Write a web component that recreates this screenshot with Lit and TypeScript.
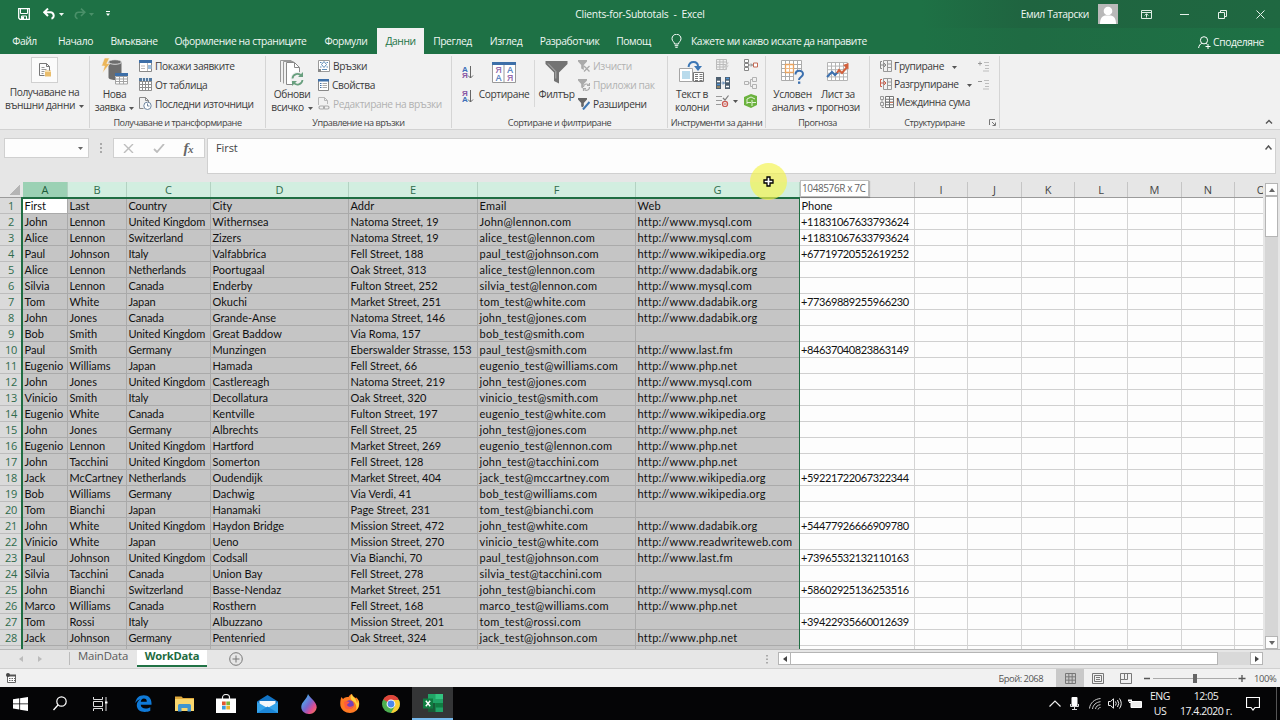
import { LitElement, css, html, svg, nothing } from 'lit'
import type { TemplateResult, SVGTemplateResult } from 'lit'

const icon = (w: number, h: number, body: SVGTemplateResult) =>
  html`<svg class="icon" width=${w} height=${h} viewBox="0 0 ${w} ${h}" fill="none">${body}</svg>`

const grid = (x: number, y: number, w: number, h: number, cols: number, rows: number, color: string) => {
  let d = `M${x} ${y}h${w}v${h}h${-w}z`
  for (let i = 1; i < cols; i++) d += `M${x + (w / cols) * i} ${y}v${h}`
  for (let i = 1; i < rows; i++) d += `M${x} ${y + (h / rows) * i}h${w}`
  return svg`<path d=${d} stroke=${color} />`
}

const caret = html`<svg class="caret" width="5" height="3" viewBox="0 0 5 3"><path d="M0 0h5L2.5 3z" fill="currentColor" /></svg>`

/* title bar */
const saveIcon = icon(12, 12, svg`<path d="M.7.7h10.6v10.6H2L.7 10z" stroke="#fff" stroke-width="1.3"/><path d="M2.5 1v4.5h7V1M3.5 11V8h5v3" stroke="#fff"/><path d="M4 8.5h2V11H4z" fill="#fff"/>`)
const undoIcon = icon(13, 12, svg`<path d="M1 4.300h6.300a3.300 3.300 0 0 1 1.200 6.400M5 .6L1.200 4.300 5 8" stroke="#fff" stroke-width="2"/>`)
const redoIcon = icon(13, 12, svg`<path d="M12 4.300H5.700a3.300 3.300 0 0 0-1.200 6.400M8 .6l3.800 3.700L8 8" stroke="#4a9069" stroke-width="1.600"/>`)
const customizeIcon = icon(4, 6, svg`<path d="M0 .5h4" stroke="#fff"/><path d="M0 2.500h4L2 5z" fill="#fff"/>`)
const avatar = icon(20, 20, svg`<path d="M0 0h20v20H0z" fill="#b9b9b9"/><circle cx="10" cy="7" r="4.300" fill="#fff"/><path d="M2 20c0-5 1.500-7.500 5-8.500h6c3.500 1 5 3.500 5 8.500z" fill="#fff"/>`)
const ribbonModeIcon = icon(11, 9, svg`<path d="M.5.5h10v8H.5zM.5 2.500h10" stroke="#dfeee5"/><path d="M5.500 7.500V4M3.700 5.500L5.500 3.700l1.800 1.800" stroke="#dfeee5"/>`)
const minimizeIcon = icon(9, 9, svg`<path d="M0 4.500h9" stroke="#e6f1ea"/>`)
const restoreIcon = icon(9, 9, svg`<path d="M.5 2.500h6v6h-6zM2.500 2V.5h6v6H7" stroke="#e6f1ea"/>`)
const closeIcon = icon(9, 9, svg`<path d="M.5.5l8 8M8.500.5l-8 8" stroke="#e6f1ea"/>`)
const bulbIcon = icon(11, 14, svg`<path d="M3.500 10c0-2-2.500-2.800-2.500-5.300a4.500 4.500 0 0 1 9 0C10 7.200 7.500 8 7.500 10zM3.700 11.700h3.600M4.300 13.300h2.400" stroke="#fff"/>`)
const shareIcon = icon(13, 13, svg`<circle cx="6" cy="4.300" r="3.600" stroke="#fff"/><path d="M.6 12c.4-2.500 1.500-4 3.200-4.600M8 7.400l1.200.8M10 8v5M7.500 10.500h5" stroke="#fff"/>`)

/* ribbon, large */
const externalDataIcon = icon(12, 14, svg`<path d="M.5.500h7l3 3v5M.5.500v12h5M7.500.500v3h3" stroke="#777"/><path d="M2.500 4.500h3M2.500 6.500h5M2.500 8.500h3M2.500 10.500h2" stroke="#999"/><path d="M6 7.500h6v6H6z" fill="#e9bd6c"/><path d="M6 8.500h6" stroke="#f6dfae"/>`)
const newQueryIcon = icon(28, 28, svg`<path d="M7.500 4v15.500c0 1.500 3 2.500 6.500 2.500s6.500-1 6.500-2.500V4z" fill="#6d6d6d"/><ellipse cx="14" cy="4" rx="6.500" ry="2.300" fill="#6d6d6d" stroke="#f1f1f1" stroke-width=".8"/><path d="M3.500 0h5L5.800 5.500H9L1.500 15l2-7H.5z" fill="#ecb65a" stroke="#f1f1f1" stroke-width=".6"/><path d="M14 15h13v11H14z" fill="#fff"/>${grid(14.5, 18.5, 12, 7.5, 3, 3, '#a3a3a3')}<path d="M14 15h13v3H14z" fill="#3d6fa8"/>`)
const refreshIcon = icon(26, 27, svg`<path d="M1.500 23V1.500h11M4.500 24.500V2.500h10" stroke="#9a9a9a"/><path d="M7.500 3.500h8l5 5v17h-13z" fill="#fff" stroke="#8a8a8a"/><path d="M15.500 3.500v5h5" stroke="#8a8a8a"/><circle cx="18.500" cy="20" r="7.200" fill="#f1f1f1"/><path d="M13.500 19.500a5 5 0 0 1 9-2.500M23.500 21a5 5 0 0 1-9 2.500" stroke="#69a07f" stroke-width="1.800"/><path d="M24 13v5h-5zM13 27v-5h5z" fill="#69a07f"/>`)
const sortIcon = icon(24, 21, svg`<path d="M.5.500h23v20H.5z" fill="#fff" stroke="#999"/><path d="M0 0h24v3H0z" fill="#3d6fa8"/><path d="M12 3v18" stroke="#999"/><g font-family="Liberation Sans" font-size="8.500" stroke-width=".2" text-anchor="middle"><text x="6.300" y="11" fill="#8857a4" stroke="#8857a4">Я</text><text x="6.300" y="19" fill="#3d6fb8" stroke="#3d6fb8">А</text><text x="17.800" y="11" fill="#3d6fb8" stroke="#3d6fb8">А</text><text x="17.800" y="19" fill="#8857a4" stroke="#8857a4">Я</text></g>`)
const sortPair = (top: string, bottom: string, c1: string, c2: string) =>
  icon(12, 14, svg`<g font-family="Liberation Sans" font-size="8" font-weight="700"><text x="0" y="6.500" fill=${c1}>${top}</text><text x="0" y="13" fill=${c2}>${bottom}</text></g><path d="M8.500 1v12M6 10.500l2.500 2.500 2.500-2.500" stroke="#666"/>`)
const filterIcon = icon(23, 23, svg`<path d="M.5 0h22v3l-8.500 8.500v11L9 20v-8.500L.5 3z" fill="#737373"/><path d="M3 2.500l7.800 8v7" stroke="#b3b3b3"/>`)
const textToColumnsIcon = icon(26, 22, svg`<path d="M.5 7.500h13v13H.5z" fill="#fff" stroke="#a5a5a5"/><path d="M3 10h8v8H3z" fill="#b9dbec"/><path d="M9.500 6c.5-3.500 2.500-5 5-5s4.500 1.500 4.500 4.500" stroke="#3d77b5" stroke-width="2"/><path d="M15 5h8l-4 5z" fill="#3d77b5"/><path d="M14.500 11.500h10v9h-10z" fill="#fff" stroke="#777"/><path d="M16 13.500h3M20.500 13.500h3M16 15.500h3M20.500 15.500h3M16 17.500h3M20.500 17.500h3M16 19.500h3M20.500 19.500h3" stroke="#777"/>`)
const whatIfIcon = icon(24, 24, svg`<path d="M.5.500h20v20H.5z" fill="#fff"/>${grid(0.5, 0.5, 20, 20, 5, 5, '#ababab')}<path d="M4.500 4.500h8v8h-8z" stroke="#e9a35f" stroke-width="1.300"/><path d="M4.500 8.500h8M8.500 4.500v8" stroke="#f0b985"/><path d="M13 10h11v14H13z" fill="#f1f1f1"/><path d="M14.500 14.500c0-5 7.500-5 7.500-.5 0 3-4 3-4 6" stroke="#3a6fae" stroke-width="2"/><path d="M17 21.500h2.300v2.300H17z" fill="#3a6fae"/>`)
const forecastIcon = icon(24, 22, svg`<path d="M1 1h21v19H1z" fill="#fff"/>${grid(1.5, 1.5, 20, 18, 5, 5, '#b5b5b5')}<path d="M1 16l5-5 3 3 3-3" stroke="#3a6fae" stroke-width="2"/><path d="M11 12l2-3 3 3 5-6" stroke="#d2603c" stroke-width="2"/><path d="M22.500 2v6.500L17 4z" fill="#d2603c"/>`)

/* ribbon, small */
const showQueriesIcon = icon(13, 12, svg`<path d="M.5.500h12v11H.5z" fill="#fff" stroke="#888"/><path d="M0 0h13v3H0z" fill="#3d6fa8"/><path d="M8.500 3v8M2 6h4M2 8.500h4" stroke="#bbb"/><path d="M9 5h3.500v4H9z" fill="#9cbede"/>`)
const fromTableIcon = icon(13, 13, svg`<path d="M.5.500h12v12H.5z" fill="#fff"/>${grid(0.5, 0.5, 12, 12, 4, 4, '#8e8e8e')}<path d="M0 0h13v3H0z" fill="#53799f"/><path d="M3.500 0v3M6.500 0v3M9.500 0v3" stroke="#d5e2ee"/>`)
const recentIcon = icon(13, 13, svg`<path d="M.5.500h6l3 3v3M.5.500v11h4M6.500.500v3h3" stroke="#888"/><circle cx="8.500" cy="8.800" r="3.700" fill="#fff" stroke="#6f86a0"/><path d="M8.500 6.500v2.500h2" stroke="#6f86a0"/>`)
const connectionsIcon = icon(12, 12, svg`<path d="M.5.500h11v11H.5z" fill="#fff" stroke="#9a9a9a"/><path d="M6 1.500l2.500 3L6 7.500l-2.500-3zM2 2.500h1.500M8.500 2.500H10M2 7h1.500M8.500 7H10" stroke="#5f8db8"/><path d="M4 9.500h5" stroke="#5f8db8"/><path d="M0 9h3v3H0z" fill="#888"/>`)
const propertiesIcon = icon(11, 12, svg`<path d="M.5.500h10v11H.5z" fill="#fff" stroke="#888"/><path d="M0 0h11v2.500H0z" fill="#3d6fa8"/><path d="M2 4.500h1.500M2 6.500h1.500M2 8.500h1.500" stroke="#3d6fa8"/><path d="M4.500 4.500H9M4.500 6.500H9M4.500 8.500H9" stroke="#aaa"/>`)
const editLinksIcon = icon(12, 13, svg`<path d="M.5 8V.500h6l3 3V7M6.500.500v3h3" stroke="#b8b8b8"/><rect x="1" y="9" width="5.500" height="3" rx="1.500" stroke="#aaa" stroke-width="1.200"/><rect x="5.500" y="9" width="5.500" height="3" rx="1.500" stroke="#aaa" stroke-width="1.200"/>`)
const funnel = (c: string) => svg`<path d="M0 0h9v1.500L5.800 5v5L3.200 8.500V5L0 1.500z" fill=${c}/>`
const clearIcon = icon(12, 12, svg`${funnel('#aaa')}<path d="M6 6l5.500 5.500M11.500 6L6 11.500" stroke="#aaa" stroke-width="1.300"/>`)
const reapplyIcon = icon(12, 12, svg`${funnel('#aaa')}<circle cx="8.500" cy="8" r="3.500" fill="#f1f1f1"/><path d="M5.500 8a3 3 0 0 1 5-2.200M11.500 8a3 3 0 0 1-5 2.500M11.500 4v2.500H9M5.500 12V9.500H8" stroke="#aaa" stroke-width="1.200"/>`)
const advancedIcon = icon(12, 12, svg`${funnel('#666')}<path d="M11.500 4.500L5.500 11" stroke="#f1f1f1" stroke-width="3.500"/><path d="M11.500 4L5 11.500" stroke="#3f77b2" stroke-width="2"/>`)
const flashFillIcon = icon(13, 12, svg`${grid(0.5, 0.5, 10, 10, 3, 4, '#bbb')}<path d="M11 3.500L7.500 8H10l-2 4 5-5.500h-2.500L13 3.500z" fill="#c9c9c9"/>`)
const duplicatesIcon = icon(14, 12, svg`<path d="M0 0h5v12H0zM9 0h5v12H9z" fill="#4d5f70"/><path d="M1 4.500h3M10 4.500h3M10 9.500h3" stroke="#fff" stroke-width="1.500"/><path d="M1 7.500h3M10 1.500h3" stroke="#4c8fd0" stroke-width="1.500"/><path d="M1 10h3" stroke="#e0b05a"/><path d="M5.500 6H8M7 4.500L8.500 6 7 7.500" stroke="#4c7cb0"/>`)
const validationIcon = icon(13, 12, svg`<path d="M0 1.500h6M0 5.500h6M0 9.500h5" stroke="#999"/><path d="M7 3l2 2 3.500-4.500" stroke="#7c7c7c" stroke-width="1.200"/><circle cx="9" cy="9" r="2.600" stroke="#cc5a52" stroke-width="1.200"/><path d="M7.500 9h3" stroke="#cc5a52"/>`)
const consolidateIcon = icon(14, 12, svg`<path d="M.5.500h4v3h-4zM.5 4.500h4v3h-4zM.5 8.500h4v3h-4z" fill="#fff" stroke="#888"/><path d="M4.500 6h4M7 4.500L8.500 6 7 7.500" stroke="#888"/><path d="M9.500 4h4v4h-4z" fill="#fff" stroke="#c26a55"/>`)
const relationsIcon = icon(13, 12, svg`<path d="M.5 4.500h4v3h-4zM8.500.500h4v4h-4zM8.500 7.500h4v4h-4zM4.500 6h2M6.500 2.500v7M6.500 2.500h2M6.500 9.500h2" stroke="#b2b2b2"/>`)
const dataModelIcon = icon(14, 14, svg`<path d="M7 0l6 2v9l-6 3-7-3V3z" fill="#6cb33f"/><path d="M3 5l4-2 4 2M3 8.500h4M8 6v6M8 8.500h4M3 5v5" stroke="#e3f2da"/>`)
const groupIcon = (c: string) => icon(12, 12, svg`<path d="M3.500.500h8v11h-8zM7.500.500v11M7.500 4h4M7.500 7.500h4" stroke="#999"/><path d="M2 1.500H.5v7H2M1 5h4M4 3l2 2-2 2" stroke=${c}/>`)
const subtotalIcon = icon(14, 12, svg`<path d="M5 0h9v12H5z" fill="#fff"/>${grid(5.5, 0.5, 8, 11, 2, 4, '#777')}<path d="M.5.500h3v3h-3zM.5 6.500h3v3h-3zM2 3.500v3M2 9.500v2h2" stroke="#999"/><path d="M10 6.500h3" stroke="#d07a5c"/><path d="M6 6.500h3" stroke="#888"/>`)
const detailIcon = (plus: boolean) => icon(12, 11, svg`<path d="M0 2.500h4${plus ? 'M2 .500v4' : ''}" stroke="#999"/><path d="M6 1.500h5M7 4.500h4M7 7.500h4M5 10h6" stroke="#bdbdbd"/>`)
const launcherIcon = icon(7, 7, svg`<path d="M.5 6V.500H6M3 3l3 3M6.500 3.500v3h-3" stroke="#777"/>`)

/* taskbar */
const startIcon = icon(15, 14, svg`<path d="M0 2.200L6.300 1.300v5.200H0zM7.100 1.200L15 0v6.500H7.100zM0 7.300h6.300v5.200L0 11.600zM7.100 7.300H15V14l-7.900-1.200z" fill="#fff"/>`)
const searchIcon = icon(14, 15, svg`<circle cx="8.500" cy="5.500" r="4.700" stroke="#fff" stroke-width="1.200"/><path d="M5 9L.5 14" stroke="#fff" stroke-width="1.300"/>`)
const taskViewIcon = icon(15, 14, svg`<path d="M.5 0v2.500h9V0M.5 14v-2.500h9V14M.5 4.500h9v5h-9zM13 0v14" stroke="#ddd"/><path d="M12 4.500h2.500v2H12z" fill="#fff"/>`)
const edgeIcon = icon(17, 17, svg`<path d="M.3 8C1 3 4.200.3 8.800.3c5 0 7.700 3.300 7.700 8v1.500H5.700c.2 2.500 2.200 3.700 4.900 3.700 1.800 0 3.300-.4 4.700-1.300v3.500c-1.500.8-3.300 1.200-5.500 1.200C5 16.900 1.800 14.300 1.800 10.200c0-2.700 1.400-4.800 3.700-6C3.300 4.800 1.500 6 .3 8zM5.800 6.800h6c0-2-1-3.200-2.900-3.200S6 4.900 5.800 6.800z" fill="#0f7ad8"/>`)
const explorerIcon = icon(19, 16, svg`<path d="M0 .5h6.500L8 2h11v4H0z" fill="#e0a93c"/><path d="M0 3h19v12H0z" fill="#f9d66d"/><path d="M3 15.500V9.500q0-1.500 1.500-1.500h10q1.500 0 1.500 1.500v6h-3.500V12h-6v3.500z" fill="#3f95d0"/>`)
const storeIcon = icon(20, 19, svg`<path d="M6.500 6V3.500a3.500 3 0 0 1 7 0V6" stroke="#eee" stroke-width="1.200"/><path d="M0 4.500h20V19H0z" fill="#fff"/><path d="M6 7.500h3.700v3.700H6z" fill="#e3572e"/><path d="M10.300 7.500H14v3.700h-3.700z" fill="#7eb53a"/><path d="M6 11.800h3.700v3.700H6z" fill="#3a9ce0"/><path d="M10.300 11.800H14v3.700h-3.700z" fill="#efb52e"/>`)
const mailIcon = icon(21, 18, svg`<path d="M0 6.500L10.500 0 21 6.500V17.500H0z" fill="#1273c4"/><path d="M2.500 6h16v5l-8 3-8-3z" fill="#f3f6fa"/><path d="M0 7l10.500 6L21 7v11H0z" fill="#35a3ea"/><path d="M0 18L10.500 11.500 21 18z" fill="#1c87d8"/>`)
const paintIcon = icon(16, 20, svg`<defs><linearGradient id="drop" x1="0" y1="0" x2="1" y2="1"><stop offset=".15" stop-color="#48b2ed"/><stop offset=".5" stop-color="#7967ce"/><stop offset=".72" stop-color="#e04c91"/><stop offset="1" stop-color="#f08447"/></linearGradient></defs><path d="M7 0c2 4 9 8 8.700 13.500A7.300 7 0 0 1 8 20C3.500 20 0 17 .3 12.500.500 8 6 5 7 0z" fill="url(#drop)"/>`)
const firefoxIcon = icon(20, 19, svg`<path d="M1.500 3l1.500 2c2-2 4-2 5.500-2 1-2 2.500-3 3.500-3 0 2 1.500 2.500 3.500 4l1-.5C19 6 19.800 9 19 12c-1 4-4.500 7-9 7s-9-3-9.600-7.500C0 8.500.5 5 1.500 3z" fill="#ff7a23"/><path d="M12 0c0 3 4.500 4 5 9.500 1-1.500.8-3.500 0-5 3 3 2.500 9-1 12 1-3 .5-8-4-10-2-1.500-2-5 0-6.500z" fill="#ffd23e"/><circle cx="9.500" cy="10.500" r="4.300" fill="#7840b8"/><path d="M4 8c2-1.500 3.500 0 5.500 0-.5 1.500-2 1.500-2.500 3 1 2.500 4.500 2 6.500.5-1 4-6 5-8.500 2.500z" fill="#ff5a3d"/>`)
const chromeIcon = icon(18, 18, svg`<circle cx="9" cy="9" r="9" fill="#4caf50"/><path d="M9 9L1.200 4.500A9 9 0 0 1 16.800 4.500z" fill="#e0453a"/><path d="M9 5h7.900A9 9 0 0 1 9 18l4-7z" fill="#fbce35"/><circle cx="9" cy="9" r="4.400" fill="#fff"/><circle cx="9" cy="9" r="3.400" fill="#4d88ec"/>`)
const excelIcon = icon(20, 18, svg`<path d="M5 0h15v18H5z" fill="#21a366"/><path d="M12.500 0H20v5h-7.500z" fill="#33c481"/><path d="M5 9h7.500v9H5z" fill="#185c37"/><path d="M12.500 9H20v4.500h-7.500z" fill="#107c41"/><path d="M0 4.500h10v10H0z" fill="#107c41"/><path d="M2.800 6.800l4.400 5.400M7.200 6.800l-4.400 5.400" stroke="#fff" stroke-width="1.400"/>`)

const taskbarApps = [edgeIcon, explorerIcon, storeIcon, mailIcon, paintIcon, firefoxIcon, chromeIcon, excelIcon]

const chevronUpIcon = icon(12, 7, svg`<path d="M.5 6.500L6 1l5.500 5.500" stroke="#eee" stroke-width="1.200"/>`)
const micIcon = icon(9, 13, svg`<rect x="1.500" y="0" width="6" height="9" rx="1" fill="#fff"/><path d="M.5 7v2.500h8V7M4.500 10v2.500M2 12.500h5" stroke="#ddd"/>`)
const wifiIcon = icon(12, 12, svg`<path d="M.5 10.500C1 5 5.500 1 11.500.500M3.500 11C4 7 7 4.200 11.500 3.700M6.500 11c.5-2.500 2-4 5-4.300M9 11.500c.3-1 1-2 2.500-2" stroke="#ccc"/>`)
const speakerIcon = icon(14, 11, svg`<path d="M.5 3.500h2L5.500.8v9.400L2.500 7.500h-2zM7.500 3.500q1.500 2 0 4M9.500 2q2.500 3.500 0 7M11.500.500q3.500 5 0 10" stroke="#eee"/>`)
const batteryIcon = icon(14, 10, svg`<path d="M3 2.500h10.500v6H3z" fill="#eee" stroke="#fff"/><path d="M0 1.500h4M1 0v3q1 2 2 0V0" stroke="#fff"/>`)
const noticeIcon = icon(14, 14, svg`<path d="M.5.500h13v10H9L7 13l-2-2.500H.5z" stroke="#fff" stroke-width="1.200"/>`)

const tabs: [string, number][] = [
  ['Файл', 41],
  ['Начало', 61],
  ['Вмъкване', 56],
  ['Оформление на страниците', 157],
  ['Формули', 54],
  ['Данни', 47],
  ['Преглед', 57],
  ['Изглед', 50],
  ['Разработчик', 77],
  ['Помощ', 51],
]

const columns: [string, number][] = [
  ['A', 45], ['B', 59], ['C', 84], ['D', 138], ['E', 129], ['F', 158], ['G', 164],
  ['', 115], ['I', 53], ['J', 54], ['K', 53], ['L', 53], ['M', 54], ['N', 53], ['O', 53],
]
const selectedColumns = 7

const clients = `First|Last|Country|City|Addr|Email|Web|Phone
John|Lennon|United Kingdom|Withernsea|Natoma Street, 19|John@lennon.com|http://www.mysql.com|+11831067633793624
Alice|Lennon|Switzerland|Zizers|Natoma Street, 19|alice_test@lennon.com|http://www.mysql.com|+11831067633793624
Paul|Johnson|Italy|Valfabbrica|Fell Street, 188|paul_test@johnson.com|http://www.wikipedia.org|+67719720552619252
Alice|Lennon|Netherlands|Poortugaal|Oak Street, 313|alice_test@lennon.com|http://www.dadabik.org|
Silvia|Lennon|Canada|Enderby|Fulton Street, 252|silvia_test@lennon.com|http://www.mysql.com|
Tom|White|Japan|Okuchi|Market Street, 251|tom_test@white.com|http://www.dadabik.org|+77369889255966230
John|Jones|Canada|Grande-Anse|Natoma Street, 146|john_test@jones.com|http://www.dadabik.org|
Bob|Smith|United Kingdom|Great Baddow|Via Roma, 157|bob_test@smith.com||
Paul|Smith|Germany|Munzingen|Eberswalder Strasse, 153|paul_test@smith.com|http://www.last.fm|+84637040823863149
Eugenio|Williams|Japan|Hamada|Fell Street, 66|eugenio_test@williams.com|http://www.php.net|
John|Jones|United Kingdom|Castlereagh|Natoma Street, 219|john_test@jones.com|http://www.mysql.com|
Vinicio|Smith|Italy|Decollatura|Oak Street, 320|vinicio_test@smith.com|http://www.php.net|
Eugenio|White|Canada|Kentville|Fulton Street, 197|eugenio_test@white.com|http://www.wikipedia.org|
John|Jones|Germany|Albrechts|Fell Street, 25|john_test@jones.com|http://www.php.net|
Eugenio|Lennon|United Kingdom|Hartford|Market Street, 269|eugenio_test@lennon.com|http://www.php.net|
John|Tacchini|United Kingdom|Somerton|Fell Street, 128|john_test@tacchini.com|http://www.php.net|
Jack|McCartney|Netherlands|Oudendijk|Market Street, 404|jack_test@mccartney.com|http://www.wikipedia.org|+59221722067322344
Bob|Williams|Germany|Dachwig|Via Verdi, 41|bob_test@williams.com|http://www.wikipedia.org|
Tom|Bianchi|Japan|Hanamaki|Page Street, 231|tom_test@bianchi.com||
John|White|United Kingdom|Haydon Bridge|Mission Street, 472|john_test@white.com|http://www.dadabik.org|+54477926666909780
Vinicio|White|Japan|Ueno|Mission Street, 270|vinicio_test@white.com|http://www.readwriteweb.com|
Paul|Johnson|United Kingdom|Codsall|Via Bianchi, 70|paul_test@johnson.com|http://www.last.fm|+73965532132110163
Silvia|Tacchini|Canada|Union Bay|Fell Street, 278|silvia_test@tacchini.com||
John|Bianchi|Switzerland|Basse-Nendaz|Market Street, 251|john_test@bianchi.com|http://www.mysql.com|+58602925136253516
Marco|Williams|Canada|Rosthern|Fell Street, 168|marco_test@williams.com|http://www.php.net|
Tom|Rossi|Italy|Albuzzano|Mission Street, 201|tom_test@rossi.com||+39422935660012639
Jack|Johnson|Germany|Pentenried|Oak Street, 324|jack_test@johnson.com|http://www.php.net|
|||||||`
  .split('\n')
  .map((line) => line.split('|'))

export class ExcelRibbon extends LitElement {
  static styles = css`
    :host {
      display: flex;
      height: 75px;
      background: #f1f1f1;
      border-bottom: 1px solid #d2d2d2;
      color: #3b3b3b;
      font-family: 'Open Sans', 'Noto Sans', sans-serif;
      font-size: 10.2px;
      letter-spacing: -0.39px;
      white-space: nowrap;
      position: relative;
    }
    .icon,
    .caret {
      display: block;
      flex: none;
    }
    .caret {
      display: inline-block;
      vertical-align: middle;
      margin-left: 4px;
      color: #555;
    }
    .row .caret {
      margin-left: 6px;
    }
    .group {
      box-sizing: border-box;
      position: relative;
      display: flex;
      flex-direction: column;
      height: 72px;
      margin-top: 2px;
      border-right: 1px solid #d5d5d5;
      flex: none;
    }
    .body {
      display: flex;
      flex: none;
      height: 60px;
    }
    .caption {
      flex: none;
      text-align: center;
      font-size: 9.1px;
      line-height: 14px;
      letter-spacing: -0.46px;
      color: #444;
    }
    .big {
      display: flex;
      flex-direction: column;
      align-items: center;
      text-align: center;
      line-height: 13px;
      flex: none;
    }
    .pic {
      height: 32px;
      display: flex;
      align-items: center;
      justify-content: center;
    }
    .boxed {
      width: 25px;
      height: 24px;
      border: 1px solid #d0d0d0;
      background: #fbfbfb;
      margin: 1px 0 3px;
    }
    .stack {
      display: flex;
      flex-direction: column;
    }
    .row {
      display: flex;
      align-items: center;
      gap: 3px;
      height: 19px;
    }
    .tight {
      padding-top: 1px;
    }
    .tight .row {
      height: 18px;
      gap: 2px;
    }
    .off {
      color: #b1b1b1;
    }
    .sorts {
      box-sizing: border-box;
      width: 27px;
      padding: 9px 0 0 10px;
      gap: 10px;
    }
    .divider {
      width: 1px;
      height: 47px;
      margin: 4px 0 0 5px;
      background: #d8d8d8;
    }
    .tools {
      display: grid;
      grid-template-columns: 28px 14px;
      grid-auto-rows: 18px;
      align-items: center;
    }
    .pair {
      display: flex;
      align-items: center;
    }
    .launcher {
      position: absolute;
      right: 3px;
      bottom: 2px;
    }
    .collapse {
      margin: auto 7px 5px auto;
    }
  `

  big(width: number, pic: TemplateResult, first: string, second = '', menu = false) {
    return html`<div class="big" style="width:${width}px">
      <div class="pic">${pic}</div>
      <div>${first}</div>
      ${second ? html`<div>${second}${menu ? caret : nothing}</div>` : nothing}
    </div>`
  }

  row(pic: TemplateResult, text: string, off = false) {
    return html`<div class="row ${off ? 'off' : ''}">${pic}<span>${text}</span></div>`
  }

  group(width: number, caption: string, body: TemplateResult, extra: unknown = nothing) {
    return html`<div class="group" style="width:${width}px">
      <div class="body">${body}</div>
      <div class="caption">${caption}</div>
      ${extra}
    </div>`
  }

  render() {
    return html`
      ${this.group(90, '', html`
        <div class="big" style="width:89px">
          <div class="pic boxed">${externalDataIcon}</div>
          <div>Получаване на</div>
          <div>външни данни${caret}</div>
        </div>
      `)}
      ${this.group(176, 'Получаване и трансформиране', html`
        ${this.big(49, newQueryIcon, 'Нова', 'заявка', true)}
        <div class="stack">
          ${this.row(showQueriesIcon, 'Покажи заявките')}
          ${this.row(fromTableIcon, 'От таблица')}
          ${this.row(recentIcon, 'Последни източници')}
        </div>
      `)}
      ${this.group(186, 'Управление на връзки', html`
        ${this.big(52, refreshIcon, 'Обнови', 'всичко', true)}
        <div class="stack">
          ${this.row(connectionsIcon, 'Връзки')}
          ${this.row(propertiesIcon, 'Свойства')}
          ${this.row(editLinksIcon, 'Редактиране на връзки', true)}
        </div>
      `)}
      ${this.group(216, 'Сортиране и филтриране', html`
        <div class="stack sorts">
          ${sortPair('А', 'Я', '#3d6fb8', '#8857a4')}
          ${sortPair('Я', 'А', '#8857a4', '#3d6fb8')}
        </div>
        ${this.big(50, sortIcon, 'Сортиране')}
        <div class="divider"></div>
        ${this.big(43, filterIcon, 'Филтър')}
        <div class="stack">
          ${this.row(clearIcon, 'Изчисти', true)}
          ${this.row(reapplyIcon, 'Приложи пак', true)}
          ${this.row(advancedIcon, 'Разширени')}
        </div>
      `)}
      ${this.group(98, 'Инструменти за данни', html`
        ${this.big(48, textToColumnsIcon, 'Текст в', 'колони')}
        <div class="tools">
          ${flashFillIcon}${consolidateIcon}
          ${duplicatesIcon}${relationsIcon}
          <div class="pair">${validationIcon}${caret}</div>
          ${dataModelIcon}
        </div>
      `)}
      ${this.group(104, 'Прогноза', html`
        ${this.big(53, whatIfIcon, 'Условен', 'анализ', true)}
        ${this.big(38, forecastIcon, 'Лист за', 'прогнози')}
      `)}
      ${this.group(130, 'Структуриране', html`
        <div class="stack tight" style="width:108px;padding-left:10px;box-sizing:border-box">
          <div class="row">${groupIcon('#888')}<span>Групиране ${caret}</span></div>
          <div class="row">${groupIcon('#cb5f4c')}<span>Разгрупиране ${caret}</span></div>
          ${this.row(subtotalIcon, 'Междинна сума')}
        </div>
        <div class="stack tight">
          <div class="row">${detailIcon(true)}</div>
          <div class="row">${detailIcon(false)}</div>
        </div>
      `, html`<div class="launcher">${launcherIcon}</div>`)}
      <div class="collapse">${icon(8, 5, svg`<path d="M1 4.500L4 1.500l3 3" stroke="#555" stroke-width="1.400"/>`)}</div>
    `
  }
}

export class ExcelSheet extends LitElement {
  static styles = css`
    :host {
      display: flex;
      height: 467px;
      background: #e6e6e6;
      letter-spacing: 0;
    }
    .grid {
      width: 1263px;
      overflow: hidden;
      position: relative;
      flex: none;
    }
    .line {
      display: flex;
      height: 16px;
      width: 1400px;
    }
    .heads {
      height: 15px;
      border-bottom: 1px solid #9b9b9b;
      font-family: 'Open Sans', sans-serif;
      font-size: 11px;
      line-height: 16px;
      color: #444;
    }
    .corner {
      width: 23px;
      flex: none;
      background: linear-gradient(135deg, #e6e6e6 60%, #b5b5b5 60%);
      clip-path: inset(0 3px 2px 0);
    }
    .head {
      box-sizing: border-box;
      flex: none;
      text-align: center;
      border-right: 1px solid #c5c5c5;
    }
    .head.sel {
      background: #d2eee0;
      color: #2f6b4c;
      border-color: #b3d2c2;
    }
    .head.active {
      background: #9bd1b4;
      color: #1c5c3b;
    }
    .num {
      box-sizing: border-box;
      width: 23px;
      padding-right: 1px;
      flex: none;
      background: #dadada;
      border-bottom: 1px solid #bdbdbd;
      color: #2f6b4c;
      text-align: center;
      font-family: 'Open Sans', sans-serif;
      font-size: 11px;
      line-height: 16px;
      letter-spacing: -0.2px;
    }
    .cell {
      box-sizing: border-box;
      flex: none;
      border-right: 1px solid #d4d4d4;
      border-bottom: 1px solid #d0d0d0;
      background: #fdfdfd;
      padding-left: 1.5px;
      color: #111;
      font-family: Lato, Carlito, sans-serif;
      font-size: 11px;
      line-height: 16px;
      white-space: nowrap;
    }
    .cell.sel {
      background: #c5c5c5;
      border-color: #aaa;
    }
    .cell.first {
      background: #fff;
    }
    .cell.tight {
      letter-spacing: -0.14px;
    }
    .cell.loose {
      letter-spacing: 0.24px;
    }
    .cell.digits {
      padding-left: 1px;
      letter-spacing: -0.4px;
    }
    .outline {
      position: absolute;
      left: 21px;
      top: 15px;
      width: 776px;
      height: 460px;
      border: solid #1f6e43;
      border-width: 2px 1px 2px 2px;
    }
    .scroll {
      display: flex;
      flex-direction: column;
      width: 13px;
      margin: 1px 0 0 2px;
    }
    .button {
      box-sizing: border-box;
      height: 13px;
      background: #fdfdfd;
      border: 1px solid #b5b5b5;
      display: flex;
      align-items: center;
      justify-content: center;
    }
    .thumb {
      box-sizing: border-box;
      height: 41px;
      background: #fff;
      border: 1px solid #b5b5b5;
    }
    .track {
      flex: 1;
      background: #d6d6d6;
    }
    .icon {
      display: block;
    }
  `

  head(name: string, width: number, i: number) {
    const cls = i === 0 ? 'head sel active' : i < selectedColumns ? 'head sel' : 'head'
    return html`<div class=${cls} style="width:${width}px">${name}</div>`
  }

  cell(text: string, row: number, i: number) {
    let cls = 'cell'
    if (i < selectedColumns) cls += ' sel'
    if (row === 0 && i === 0) cls += ' first'
    if (i === 2) cls += ' tight'
    if (i === 5 || i === 6) cls += ' loose'
    if (text.startsWith('+')) cls += ' digits'
    return html`<div class=${cls} style="width:${columns[i][1]}px">${text}</div>`
  }

  render() {
    return html`
      <div class="grid">
        <div class="line heads">
          <div class="corner"></div>
          ${columns.map(([name, width], i) => this.head(name, width, i))}
        </div>
        ${clients.map((client, row) => html`
          <div class="line">
            <div class="num">${row < 28 ? row + 1 : nothing}</div>
            ${columns.map((_, i) => this.cell(client[i] ?? '', row, i))}
          </div>
        `)}
        <div class="outline"></div>
      </div>
      <div class="scroll">
        <div class="button">${icon(6, 4, svg`<path d="M0 4l3-4 3 4z" fill="#666"/>`)}</div>
        <div class="thumb"></div>
        <div class="track"></div>
        <div class="button">${icon(6, 4, svg`<path d="M0 0l3 4 3-4z" fill="#666"/>`)}</div>
      </div>
    `
  }
}

export class WindowsTaskbar extends LitElement {
  static styles = css`
    :host {
      display: flex;
      height: 33px;
      background: #050506;
      color: #f2f2f2;
      font-family: 'Open Sans', 'Noto Sans', sans-serif;
      font-size: 10.5px;
      letter-spacing: -0.45px;
    }
    .icon {
      display: block;
    }
    .slot {
      box-sizing: border-box;
      width: 40px;
      display: flex;
      align-items: center;
      justify-content: center;
      flex: none;
    }
    .apps {
      display: flex;
      margin-left: 3px;
    }
    .apps .slot {
      width: 41.3px;
    }
    .apps .slot:last-child {
      background: #343536;
      border-bottom: 2px solid #76b9ed;
    }
    .tray {
      margin-left: auto;
      display: flex;
      align-items: center;
      text-align: center;
      line-height: 15px;
    }
    .peek {
      width: 3px;
      align-self: stretch;
      border-left: 1px solid #555;
    }
  `

  render() {
    return html`
      <div class="slot">${startIcon}</div>
      <div class="slot">${searchIcon}</div>
      <div class="slot">${taskViewIcon}</div>
      <div class="apps">${taskbarApps.map((app) => html`<div class="slot">${app}</div>`)}</div>
      <div class="tray">
        <div class="slot" style="width:20px">${chevronUpIcon}</div>
        <div class="slot" style="width:19px">${micIcon}</div>
        <div class="slot" style="width:22px">${wifiIcon}</div>
        <div class="slot" style="width:18px">${speakerIcon}</div>
        <div class="slot" style="width:22px">${batteryIcon}</div>
        <div style="width:28px">ENG<br />US</div>
        <div style="width:64px">12:05<br />17.4.2020 г.</div>
        <div class="slot" style="width:30px;margin-right:8px">${noticeIcon}</div>
        <div class="peek"></div>
      </div>
    `
  }
}

export class AppRoot extends LitElement {
  static styles = css`
    :host {
      display: flex;
      flex-direction: column;
      width: 1280px;
      height: 720px;
      position: relative;
      overflow: hidden;
      background: #e6e6e6;
      font-family: 'Open Sans', 'Noto Sans', sans-serif;
      font-size: 10.3px;
      letter-spacing: -0.36px;
      white-space: nowrap;
    }
    .icon,
    .caret {
      display: block;
      flex: none;
    }
    .title {
      display: grid;
      grid-template-columns: 1fr auto 1fr;
      align-items: center;
      height: 28px;
      background: linear-gradient(90deg, #1e7145 72%, #1f6440 80%, #1f6841);
      color: #f0f7f3;
      line-height: 26px;
    }
    .doc {
      letter-spacing: -0.22px;
    }
    .quick,
    .account {
      display: flex;
      align-items: center;
      height: 27px;
    }
    .quick {
      padding-left: 18px;
    }
    .undo {
      display: flex;
      align-items: center;
      gap: 3px;
      margin-left: 13px;
    }
    .undo.off {
      margin-left: 9px;
      margin-right: 12px;
      color: #4a9069;
    }
    .account {
      justify-content: flex-end;
      padding-right: 15px;
    }
    .user {
      margin-right: 9px;
      letter-spacing: -0.4px;
    }
    .tabs {
      display: flex;
      align-items: stretch;
      height: 26px;
      padding-left: 4px;
      background: linear-gradient(90deg, #1e7145 72%, #1f6b43 80%, #1e7145);
      color: #f0f7f3;
      line-height: 27px;
      letter-spacing: -0.42px;
    }
    .tab {
      text-align: center;
      flex: none;
    }
    .tab.on {
      margin-left: 4px;
      background: #f1f1f1;
      color: #217346;
    }
    .tell {
      display: flex;
      align-items: center;
      gap: 9px;
      margin-left: 12px;
    }
    .share {
      display: flex;
      align-items: center;
      gap: 2px;
      margin: 2px 16px 0 auto;
    }
    .formula {
      box-sizing: border-box;
      display: flex;
      align-items: flex-start;
      height: 52px;
      padding: 8px 4px 0 4px;
      color: #444;
    }
    .box {
      box-sizing: border-box;
      height: 20px;
      background: #fdfdfd;
      border: 1px solid #d0d0d0;
      display: flex;
      align-items: center;
    }
    .name {
      width: 85px;
      justify-content: flex-end;
      padding-right: 5px;
      color: #666;
    }
    .dots {
      width: 24px;
      height: 20px;
      display: flex;
      align-items: center;
      justify-content: center;
    }
    .fx {
      width: 92px;
      justify-content: space-between;
      padding: 0 11px 0 9px;
    }
    .fn {
      font: italic 700 15px 'Liberation Serif', serif;
      letter-spacing: -0.5px;
      color: #666;
    }
    .fn small {
      font-size: 11px;
    }
    .input {
      flex: 1;
      height: 36px;
      margin-left: 2px;
      padding: 1px 3px 0 8px;
      align-items: flex-start;
      justify-content: space-between;
      font-size: 11px;
      letter-spacing: -0.1px;
    }
    .sheets {
      display: flex;
      height: 20px;
      box-sizing: border-box;
      border-top: 1px solid #b8b8b8;
      border-bottom: 1px solid #d0d0d0;
      color: #5a5a5a;
      font-size: 11.4px;
      letter-spacing: -0.15px;
    }
    .nav {
      width: 69px;
      display: flex;
      align-items: center;
      gap: 15px;
      padding-left: 19px;
      box-sizing: border-box;
    }
    .sheet {
      width: 67px;
      box-sizing: border-box;
      border-left: 1px solid #bbb;
      margin: 2px 1px 3px 0;
      line-height: 8px;
      text-align: center;
    }
    .sheet.on {
      width: 70px;
      margin: 0;
      height: 17px;
      line-height: 12px;
      background: #fff;
      border: 0;
      border-bottom: 2px solid #217346;
      color: #1e6b41;
      font-weight: 700;
      font-size: 11.2px;
      letter-spacing: -0.25px;
    }
    .add {
      margin: 2px 0 0 22px;
    }
    .grip {
      margin: 5px 10px 0 auto;
    }
    .hscroll {
      display: flex;
      width: 485px;
      height: 13px;
      margin: 2px 17px 0 0;
      background: #d9d9d9;
    }
    .key {
      box-sizing: border-box;
      width: 13px;
      background: #fff;
      border: 1px solid #b5b5b5;
      display: flex;
      align-items: center;
      justify-content: center;
    }
    .bar {
      box-sizing: border-box;
      width: 427px;
      background: #fff;
      border: 1px solid #b5b5b5;
      border-left: 0;
      margin-right: auto;
    }
    .status {
      display: flex;
      align-items: center;
      height: 18px;
      background: #f1f1f1;
      color: #555;
      font-size: 9.4px;
      letter-spacing: -0.4px;
      padding-left: 6px;
    }
    .count {
      margin: 0 13px 0 auto;
      letter-spacing: -0.5px;
    }
    .view {
      width: 28px;
      height: 18px;
      display: flex;
      align-items: center;
      justify-content: center;
    }
    .view.on {
      background: #c9c9c9;
    }
    .zoom {
      margin: 0 7px 0 3px;
    }
    .percent {
      width: 21px;
      margin-right: 5px;
    }
    .halo {
      position: absolute;
      left: 750px;
      top: 163px;
      width: 37px;
      height: 37px;
      border-radius: 50%;
      background: rgba(243, 243, 80, 0.68);
      display: flex;
      align-items: center;
      justify-content: center;
    }
    .tip {
      position: absolute;
      left: 800px;
      top: 180px;
      box-sizing: border-box;
      width: 69px;
      height: 17px;
      border: 1px solid #bcbcbc;
      background: #fff;
      color: #666;
      line-height: 15px;
      font-size: 10px;
      letter-spacing: -0.4px;
      padding-left: 1px;
      box-shadow: 1px 1px 1px rgba(0, 0, 0, 0.2);
    }
  `

  render() {
    return html`
      <div class="title">
        <div class="quick">
          ${saveIcon}
          <div class="undo">${undoIcon}${caret}</div>
          <div class="undo off">${redoIcon}${caret}</div>
          ${customizeIcon}
        </div>
        <div class="doc">Clients-for-Subtotals&nbsp; -&nbsp; Excel</div>
        <div class="account">
          <span class="user">Емил Татарски</span>
          ${avatar}
          <span style="margin:0 28px 0 23px">${ribbonModeIcon}</span>
          ${minimizeIcon}
          <span style="margin:0 29px">${restoreIcon}</span>
          ${closeIcon}
        </div>
      </div>
      <div class="tabs">
        ${tabs.map(([name, width]) => html`
          <div class="tab ${name === 'Данни' ? 'on' : ''}" style="width:${width}px">${name}</div>
        `)}
        <div class="tell">${bulbIcon}<span>Кажете ми какво искате да направите</span></div>
        <div class="share">${shareIcon}<span>Споделяне</span></div>
      </div>
      <excel-ribbon></excel-ribbon>
      <div class="formula">
        <div class="box name">${caret}</div>
        <div class="dots">${icon(2, 11, svg`<path d="M1 0v11" stroke="#aaa" stroke-width="2" stroke-dasharray="2 2"/>`)}</div>
        <div class="box fx">
          ${icon(11, 9, svg`<path d="M1 0l9 9M10 0L1 9" stroke="#bdbdbd" stroke-width="1.400"/>`)}
          ${icon(12, 9, svg`<path d="M1 5l3 3 7-8" stroke="#bdbdbd" stroke-width="1.800"/>`)}
          <span class="fn">f<small>x</small></span>
        </div>
        <div class="box input">
          <span>First</span>
          <span style="padding-top:5px">${icon(7, 5, svg`<path d="M.5 4.500l3-3.500 3 3.500" stroke="#555" stroke-width="1.500"/>`)}</span>
        </div>
      </div>
      <excel-sheet></excel-sheet>
      <div class="sheets">
        <div class="nav">
          ${icon(4, 6, svg`<path d="M4 0v6L0 3z" fill="#bbb"/>`)}
          ${icon(4, 6, svg`<path d="M0 0v6l4-3z" fill="#bbb"/>`)}
        </div>
        <div class="sheet">MainData</div>
        <div class="sheet on">WorkData</div>
        <div class="add">${icon(14, 14, svg`<circle cx="7" cy="7" r="6.300" stroke="#777"/><path d="M7 3.500v7M3.500 7h7" stroke="#777"/>`)}</div>
        <div class="grip">${icon(2, 9, svg`<path d="M1 0v9" stroke="#aaa" stroke-width="2" stroke-dasharray="1.500 2"/>`)}</div>
        <div class="hscroll">
          <div class="key">${icon(4, 6, svg`<path d="M4 0v6L0 3z" fill="#444"/>`)}</div>
          <div class="bar"></div>
          <div class="key">${icon(4, 6, svg`<path d="M0 0v6l4-3z" fill="#444"/>`)}</div>
        </div>
      </div>
      <div class="status">
        ${icon(10, 10, svg`<path d="M1.500 2.500h8v7h-8z" fill="#fff" stroke="#666"/><path d="M3 2.500h7" stroke="#555" stroke-width="2"/><circle cx="2" cy="2" r="2" fill="#444"/><path d="M3 5.500h1.500M5.500 5.500H7M3 7.500h1.500M5.500 7.500H7M8 5.500h1M8 7.500h1" stroke="#666"/>`)}
        <div class="count">Брой: 2068</div>
        <div class="view on">${icon(11, 11, grid(0.5, 0.5, 10, 10, 3, 3, '#777'))}</div>
        <div class="view">${icon(12, 11, svg`<path d="M.5.500h11v10H.5zM2.500 2.500h7v6h-7zM4 4.500h4M4 6.500h4" stroke="#777"/>`)}</div>
        <div class="view">${icon(12, 11, svg`<path d="M.5.500h11v10H.5zM4.500.500v6h-4M7.500.500v6h-3" stroke="#777"/>`)}</div>
        <div class="zoom">${icon(104, 9, svg`<path d="M1 4.500h6" stroke="#555" stroke-width="1.500"/><path d="M10 4.500h84" stroke="#aaa"/><path d="M50 0h4v9h-4z" fill="#666"/><path d="M95.500 4.500h7M99 1v7" stroke="#555" stroke-width="1.300"/>`)}</div>
        <div class="percent">100%</div>
      </div>
      <windows-taskbar></windows-taskbar>
      <div class="halo">${icon(11, 11, svg`<path d="M4 1h3v3h3v3H7v3H4V7H1V4h3z" fill="#fff" stroke="#000" stroke-width="1.300"/>`)}</div>
      <div class="tip">1048576R x 7C</div>
    `
  }
}

customElements.define('excel-ribbon', ExcelRibbon)
customElements.define('excel-sheet', ExcelSheet)
customElements.define('windows-taskbar', WindowsTaskbar)
customElements.define('app-root', AppRoot)

declare global {
  interface HTMLElementTagNameMap {
    'excel-ribbon': ExcelRibbon
    'excel-sheet': ExcelSheet
    'windows-taskbar': WindowsTaskbar
    'app-root': AppRoot
  }
}
